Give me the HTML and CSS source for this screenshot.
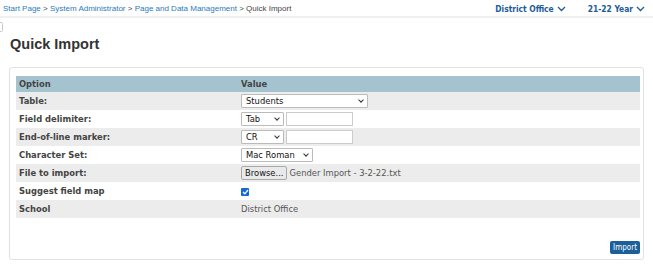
FILE: index.html
```html
<!DOCTYPE html>
<html lang="en">
<head>
    <meta charset="UTF-8">
    <title>Quick Import</title>
    <link rel="stylesheet" href="styles.css">
</head>
<body>
    <div class="top-bar">
        <div class="breadcrumbs">
            <a href="#">Start Page</a> &gt;
            <a href="#">System Administrator</a> &gt;
            <a href="#">Page and Data Management</a> &gt;
            <span>Quick Import</span>
        </div>
        <div class="top-menus">
            <a href="#" class="top-menu">District Office
                <svg width="9" height="6" viewBox="0 0 9 6"><path d="M1 1l3.5 3.5L8 1" fill="none" stroke="currentColor" stroke-width="1.3"/></svg>
            </a>
            <a href="#" class="top-menu">21-22 Year
                <svg width="9" height="6" viewBox="0 0 9 6"><path d="M1 1l3.5 3.5L8 1" fill="none" stroke="currentColor" stroke-width="1.3"/></svg>
            </a>
        </div>
    </div>
    <div class="side-tab"></div>

    <h1 class="page-title">Quick Import</h1>

    <div class="box">
        <table class="grid">
            <tr class="head">
                <th class="col-option">Option</th>
                <th>Value</th>
            </tr>
            <tr class="shade">
                <td class="label">Table:</td>
                <td><div class="select wide">Students<span class="caret"></span></div></td>
            </tr>
            <tr>
                <td class="label">Field delimiter:</td>
                <td class="inline">
                    <div class="select small">Tab<span class="caret"></span></div>
                    <div class="text-input"></div>
                </td>
            </tr>
            <tr class="shade">
                <td class="label">End-of-line marker:</td>
                <td class="inline">
                    <div class="select small">CR<span class="caret"></span></div>
                    <div class="text-input"></div>
                </td>
            </tr>
            <tr>
                <td class="label">Character Set:</td>
                <td><div class="select medium">Mac Roman<span class="caret"></span></div></td>
            </tr>
            <tr class="shade">
                <td class="label">File to import:</td>
                <td class="inline">
                    <span class="browse">Browse...</span>
                    <span class="file-name">Gender Import - 3-2-22.txt</span>
                </td>
            </tr>
            <tr>
                <td class="label">Suggest field map</td>
                <td>
                    <span class="checkbox">
                        <svg width="7" height="6" viewBox="0 0 7 6"><path d="M1 3l1.8 1.8L6 1" fill="none" stroke="#fff" stroke-width="1.3"/></svg>
                    </span>
                </td>
            </tr>
            <tr class="shade">
                <td class="label">School</td>
                <td class="plain">District Office</td>
            </tr>
        </table>
        <div class="actions">
            <button class="import-btn">Import</button>
        </div>
    </div>
</body>
</html>
```

FILE: styles.css
```css
body {
    margin: 0;
    background-color: #fff;
    font-family: "DejaVu Sans", Verdana, sans-serif;
    color: #333;
}

a {
    text-decoration: none;
}

.top-bar {
    display: flex;
    justify-content: space-between;
    align-items: center;
    height: 16px;
    padding: 0 8px 0 3px;
    border-bottom: 2px solid #f0f0f0;
}

.breadcrumbs {
    font-family: "Liberation Sans", Arial, sans-serif;
    font-size: 8px;
    color: #444;
    padding-top: 1px;
}

.breadcrumbs a {
    color: #2a7bbf;
}

.top-menus {
    display: flex;
    gap: 22px;
    padding-top: 1px;
}

.top-menu {
    font-family: "DejaVu Sans Condensed", "DejaVu Sans", sans-serif;
    font-size: 8.4px;
    font-weight: bold;
    color: #1b5c99;
    display: flex;
    align-items: center;
    gap: 3px;
}

.side-tab {
    position: absolute;
    left: 0;
    top: 22px;
    width: 2px;
    height: 8px;
    border: 1px solid #ccc;
    border-left: none;
    border-radius: 0 2px 2px 0;
}

.page-title {
    font-family: "Liberation Sans", Arial, sans-serif;
    font-size: 14.5px;
    line-height: 17px;
    font-weight: bold;
    color: #333;
    margin: 18px 0 0 10px;
}

.box {
    margin: 14px 9px 0 9px;
    border: 1px solid #e2e2e2;
    border-radius: 3px;
    padding: 8px 3px 5px 6px;
    box-shadow: 0 1px 1px rgba(0, 0, 0, 0.04);
}

.grid {
    width: 100%;
    border-collapse: collapse;
    font-size: 8.4px;
}

.grid th {
    background-color: #a5c3cf;
    text-align: left;
    font-weight: bold;
    color: #444;
    height: 16px;
    padding: 0 3px;
}

.col-option {
    width: 216px;
}

.grid td {
    height: 18px;
    padding: 0 3px;
    vertical-align: middle;
}

.grid tr.shade td {
    background-color: #ececec;
}

.label {
    font-weight: bold;
    color: #444;
}

.inline {
    display: flex;
    align-items: center;
    gap: 2px;
}

.select {
    display: inline-flex;
    justify-content: space-between;
    align-items: center;
    box-sizing: border-box;
    height: 14px;
    padding: 0 4px 0 4px;
    background-color: #fff;
    border: 1px solid #bbb;
    border-radius: 1px;
    color: #111;
    font-size: 8.4px;
    vertical-align: middle;
}

.select.wide {
    width: 127px;
}

.select.small {
    width: 43px;
}

.select.medium {
    width: 72px;
}

.caret {
    width: 3px;
    height: 3px;
    border-right: 1px solid #333;
    border-bottom: 1px solid #333;
    transform: rotate(45deg);
    margin-top: -3px;
}

.text-input {
    box-sizing: border-box;
    width: 67px;
    height: 14px;
    background-color: #fff;
    border: 1px solid #ccc;
}

.browse {
    box-sizing: border-box;
    height: 14px;
    padding: 0 3px;
    display: inline-flex;
    align-items: center;
    background-color: #e9e9e9;
    border: 1px solid #a8a8a8;
    border-radius: 2px;
    color: #111;
}

.file-name {
    color: #555;
}

.checkbox {
    display: inline-flex;
    align-items: center;
    justify-content: center;
    width: 8px;
    height: 8px;
    background-color: #1668d9;
    border-radius: 1px;
    vertical-align: middle;
}

.plain {
    color: #555;
}

.actions {
    display: flex;
    justify-content: flex-end;
    margin-top: 23px;
}

.import-btn {
    font-family: "DejaVu Sans Condensed", "DejaVu Sans", sans-serif;
    font-size: 8px;
    color: #fff;
    background-color: #1b5f9b;
    border: none;
    border-radius: 2px;
    height: 13px;
    padding: 0 3px;
}
```
